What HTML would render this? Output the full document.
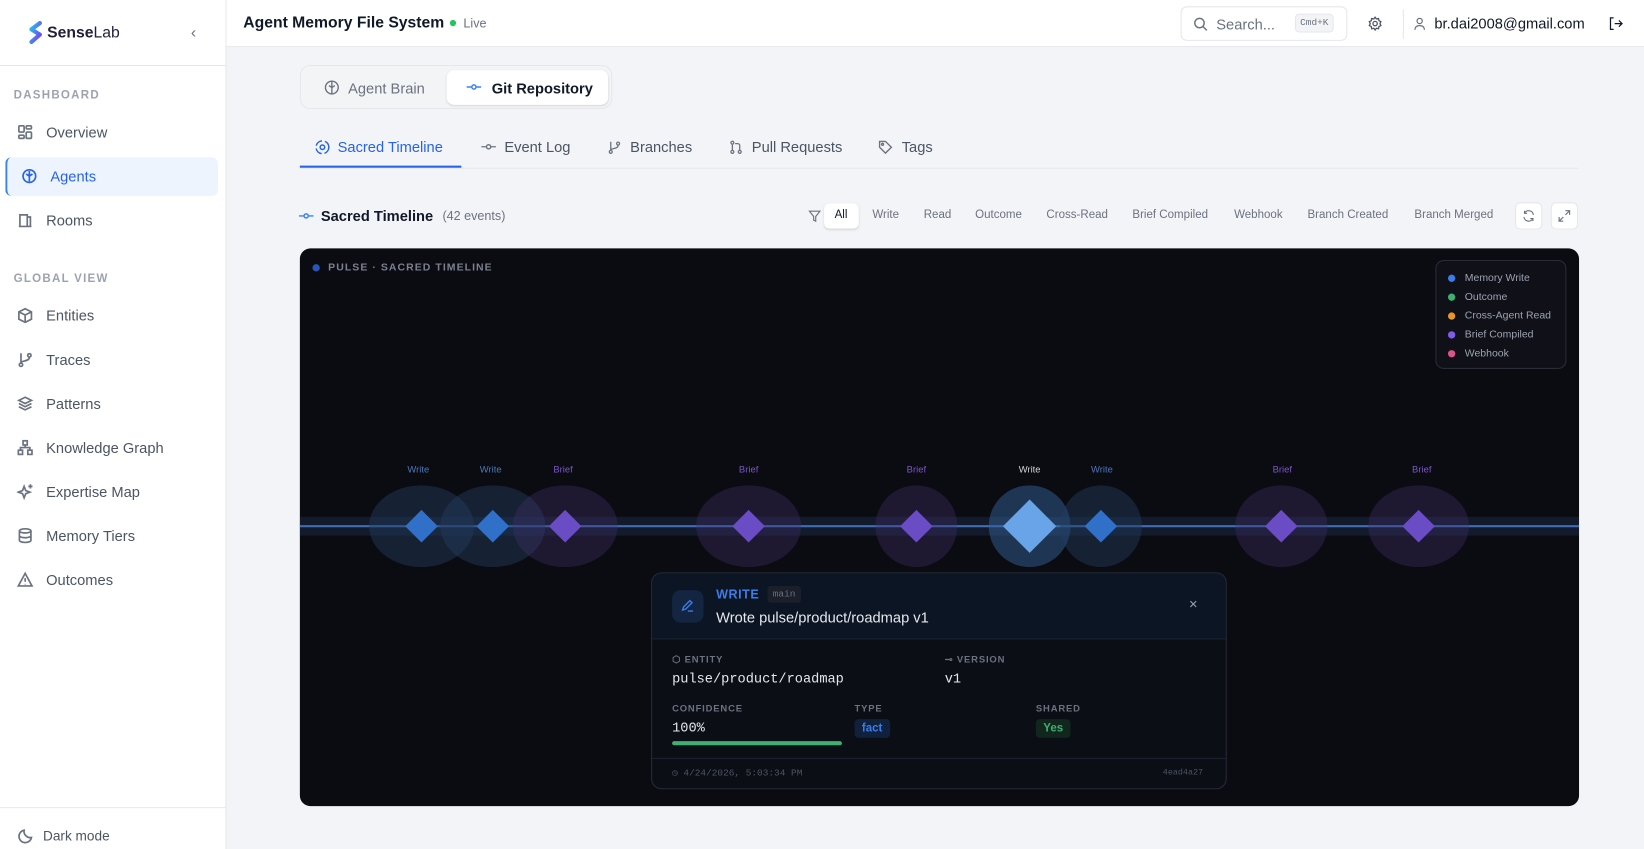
<!DOCTYPE html>
<html><head><meta charset="utf-8"><style>
*{box-sizing:border-box;margin:0;padding:0}
html,body{width:1644px;height:849px;overflow:hidden}
body{font-family:"Liberation Sans",sans-serif;background:#f3f4f7;color:#111827}
#w{position:absolute;left:0;top:0;width:1568px;height:810px;transform:scale(1.0485,1.0482);transform-origin:0 0;background:#f3f4f7}
.abs{position:absolute}
.side{left:0;top:0;width:216px;height:810px;background:#fff;border-right:1px solid #e5e7eb}
.nav{position:absolute;left:16px;display:flex;align-items:center;font-size:14px;color:#4b5563}
.nav svg{width:16px;height:16px;margin-right:12px;stroke:#6b7280;fill:none;stroke-width:1.6}
.sec{position:absolute;left:13px;font-size:11px;letter-spacing:1.2px;color:#9ca3af;font-weight:bold}
.top{left:216px;top:0;width:1352px;height:45px;background:#fff;border-bottom:1px solid #e5e7eb}
.f{position:absolute;top:199px;font-size:11px;color:#6b7280}
.mono{font-family:"Liberation Mono",monospace}
.node{position:absolute;top:463px;width:100px;height:78px;border-radius:50%;margin-left:-50px}
.dia{position:absolute;width:22px;height:22px;transform:rotate(45deg);top:491px;margin-left:-11px}
.lbl{position:absolute;top:443px;font-size:9px;transform:translateX(-50%)}
.lg{display:flex;align-items:center;font-size:10px;color:#9ca3af;height:18px}
.lg i{width:7px;height:7px;border-radius:50%;margin-right:9px;display:inline-block}
.cap{font-size:9px;color:#6b7280;letter-spacing:.8px;font-weight:bold}
</style></head><body><div id="w">
<div class="abs side">
 <div class="abs" style="left:26px;top:20px;display:flex;align-items:center">
  <svg width="16" height="22" viewBox="0 0 16 22"><defs><linearGradient id="g" x1="0" y1="0" x2="1" y2="1"><stop offset="0" stop-color="#22c3ee"/><stop offset="1" stop-color="#7c3aed"/></linearGradient></defs><path d="M12 2 L4 8 L12 13 L4 20" stroke="url(#g)" stroke-width="4" fill="none" stroke-linecap="round" stroke-linejoin="round"/></svg>
  <span style="font-size:15px;font-weight:bold;color:#1f1f3a;margin-left:3px">Sense<span style="font-weight:normal">Lab</span></span>
 </div>
 <div class="abs" style="left:182px;top:23px;color:#6b7280;font-size:15px">‹</div>
 <div class="abs" style="left:0;top:62px;width:216px;border-top:1px solid #e5e7eb"></div>
 <div class="sec" style="top:85px">DASHBOARD</div>
 <div class="nav" style="top:118px"><svg viewBox="0 0 16 16"><rect x="2" y="2" width="5" height="6" rx="1"/><rect x="9" y="2" width="5" height="3" rx="1"/><rect x="9" y="8" width="5" height="6" rx="1"/><rect x="2" y="11" width="5" height="3" rx="1"/></svg>Overview</div>
 <div class="abs" style="left:5px;top:150px;width:203px;height:37px;background:#eef4fe;border-radius:6px;border-left:2px solid #3b82f6"></div>
 <div class="nav" style="top:160px;left:20px;color:#2563eb"><svg viewBox="0 0 16 16" style="stroke:#2563eb"><circle cx="8" cy="8" r="6"/><path d="M8 3v10M5 6l3 2 3-2"/></svg>Agents</div>
 <div class="nav" style="top:202px"><svg viewBox="0 0 16 16"><path d="M3 14V3h7v11M10 5h3v9M2 14h12"/></svg>Rooms</div>
 <div class="sec" style="top:260px">GLOBAL VIEW</div>
 <div class="nav" style="top:293px"><svg viewBox="0 0 16 16"><path d="M8 1.5l6 3v7l-6 3-6-3v-7zM2 4.5l6 3 6-3M8 7.5v7"/></svg>Entities</div>
 <div class="nav" style="top:335px"><svg viewBox="0 0 16 16"><circle cx="4" cy="13" r="1.6"/><circle cx="12" cy="4" r="1.6"/><path d="M4 2v9M12 6c0 4-8 3-8 5"/></svg>Traces</div>
 <div class="nav" style="top:377px"><svg viewBox="0 0 16 16"><path d="M8 2l6 3-6 3-6-3zM2 8l6 3 6-3M2 11l6 3 6-3"/></svg>Patterns</div>
 <div class="nav" style="top:419px"><svg viewBox="0 0 16 16"><rect x="6" y="1.5" width="4" height="4"/><rect x="1.5" y="10.5" width="4" height="4"/><rect x="10.5" y="10.5" width="4" height="4"/><path d="M8 5.5v2.5M3.5 10.5V8h9v2.5"/></svg>Knowledge Graph</div>
 <div class="nav" style="top:461px"><svg viewBox="0 0 16 16"><path d="M7 3l1.5 4 4 1.5-4 1.5L7 14l-1.5-4-4-1.5 4-1.5zM13 1v4M11 3h4"/></svg>Expertise Map</div>
 <div class="nav" style="top:503px"><svg viewBox="0 0 16 16"><ellipse cx="8" cy="3.5" rx="5.5" ry="2"/><path d="M2.5 3.5v9c0 1.1 2.5 2 5.5 2s5.5-.9 5.5-2v-9M2.5 8c0 1.1 2.5 2 5.5 2s5.5-.9 5.5-2"/></svg>Memory Tiers</div>
 <div class="nav" style="top:545px"><svg viewBox="0 0 16 16"><path d="M8 2l6.5 12h-13zM8 6.5v3.5M8 12v.5"/></svg>Outcomes</div>
 <div class="abs" style="left:0;top:770px;width:216px;border-top:1px solid #e5e7eb"></div>
 <div class="nav" style="top:789px;left:17px;font-size:13px"><svg viewBox="0 0 16 16" style="margin-right:8px"><path d="M13 10A6 6 0 0 1 6 3a6 6 0 1 0 7 7z"/></svg>Dark mode</div>
</div>
<div class="abs top">
 <div class="abs" style="left:16px;top:13px;font-size:15px;font-weight:bold">Agent Memory File System</div>
 <div class="abs" style="left:213px;top:19px;width:6px;height:6px;border-radius:50%;background:#22c55e"></div>
 <div class="abs" style="left:226px;top:15px;font-size:12px;color:#6b7280">Live</div>
 <div class="abs" style="left:910px;top:6px;width:159px;height:33px;border:1px solid #e5e7eb;border-radius:6px">
  <svg class="abs" style="left:11px;top:9px" width="14" height="14" viewBox="0 0 14 14" fill="none" stroke="#6b7280" stroke-width="1.4"><circle cx="6" cy="6" r="4.5"/><path d="M9.5 9.5L13 13"/></svg>
  <span class="abs" style="left:33px;top:8px;font-size:14px;color:#6b7280">Search...</span>
  <span class="abs mono" style="left:108px;top:6px;font-size:9px;color:#6b7280;background:#f3f4f6;border:1px solid #e5e7eb;border-radius:4px;padding:3px 4px">Cmd+K</span>
 </div>
 <svg class="abs" style="left:1088px;top:15px" width="15" height="15" viewBox="0 0 16 16" fill="none" stroke="#4b5563" stroke-width="1.3"><circle cx="8" cy="8" r="2.2"/><path d="M8 1.5l1.3 1.8 2.2-.5.4 2.2 2 1-1 2 1 2-2 1-.4 2.2-2.2-.5L8 14.5l-1.3-1.8-2.2.5-.4-2.2-2-1 1-2-1-2 2-1 .4-2.2 2.2.5z"/></svg>
 <div class="abs" style="left:1122px;top:9px;height:28px;border-left:1px solid #e5e7eb"></div>
 <svg class="abs" style="left:1132px;top:16px" width="12" height="13" viewBox="0 0 12 13" fill="none" stroke="#6b7280" stroke-width="1.2"><circle cx="6" cy="4" r="2.5"/><path d="M1.5 12.5c0-3 2-4 4.5-4s4.5 1 4.5 4"/></svg>
 <div class="abs" style="left:1152px;top:14px;font-size:14px;color:#111827">br.dai2008@gmail.com</div>
 <svg class="abs" style="left:1318px;top:16px" width="14" height="13" viewBox="0 0 14 13" fill="none" stroke="#111827" stroke-width="1.2"><path d="M5 1H2v11h3M6 6.5h7M10 3.5l3 3-3 3"/></svg>
</div>
<div class="abs" style="left:286px;top:62px;width:298px;height:42px;background:#f3f4f6;border:1px solid #e5e7eb;border-radius:10px"></div>
<svg class="abs" style="left:309px;top:76px" width="15" height="15" viewBox="0 0 16 16" fill="none" stroke="#6b7280" stroke-width="1.4"><circle cx="8" cy="8" r="6.5"/><path d="M8 2v12M5 6l3 2 3-2"/></svg>
<div class="abs" style="left:332px;top:76px;font-size:14px;color:#6b7280">Agent Brain</div>
<div class="abs" style="left:426px;top:67px;width:154px;height:33px;background:#fff;border-radius:7px;box-shadow:0 1px 2px rgba(0,0,0,.12)"></div>
<svg class="abs" style="left:445px;top:79px" width="14" height="8" viewBox="0 0 14 8" fill="none" stroke="#3b82f6" stroke-width="1.4"><circle cx="7" cy="4" r="2"/><path d="M0 4h5M9 4h5"/></svg>
<div class="abs" style="left:469px;top:76px;font-size:14px;font-weight:bold;color:#111827">Git Repository</div>
<div class="abs" style="left:286px;top:160px;width:1219px;border-top:1px solid #e5e7eb"></div>
<div class="abs" style="left:286px;top:158px;width:154px;height:2px;background:#2563eb"></div>
<svg class="abs" style="left:300px;top:133px" width="15" height="15" viewBox="0 0 16 16" fill="none" stroke="#2563eb" stroke-width="1.5"><circle cx="8" cy="8" r="6.5" stroke-dasharray="8 3"/><circle cx="8" cy="8" r="2.3"/></svg>
<div class="abs" style="left:322px;top:132px;font-size:14px;color:#2563eb">Sacred Timeline</div>
<svg class="abs" style="left:459px;top:136px" width="14" height="8" viewBox="0 0 14 8" fill="none" stroke="#6b7280" stroke-width="1.3"><circle cx="7" cy="4" r="2"/><path d="M0 4h5M9 4h5"/></svg>
<div class="abs" style="left:481px;top:132px;font-size:14px;color:#4b5563">Event Log</div>
<svg class="abs" style="left:579px;top:133px" width="14" height="15" viewBox="0 0 16 16" fill="none" stroke="#6b7280" stroke-width="1.4"><circle cx="4" cy="13" r="1.6"/><circle cx="12" cy="4" r="1.6"/><path d="M4 2v9M12 6c0 4-8 3-8 5"/></svg>
<div class="abs" style="left:601px;top:132px;font-size:14px;color:#4b5563">Branches</div>
<svg class="abs" style="left:695px;top:133px" width="14" height="15" viewBox="0 0 16 16" fill="none" stroke="#6b7280" stroke-width="1.4"><circle cx="4" cy="3" r="1.6"/><circle cx="12" cy="13" r="1.6"/><circle cx="4" cy="13" r="1.6"/><path d="M4 5v6M12 11V6c0-1-1-2-2-2H7"/></svg>
<div class="abs" style="left:717px;top:132px;font-size:14px;color:#4b5563">Pull Requests</div>
<svg class="abs" style="left:837px;top:133px" width="15" height="15" viewBox="0 0 16 16" fill="none" stroke="#6b7280" stroke-width="1.4"><path d="M2 2h6l6 6-6 6-6-6z"/><circle cx="5" cy="5" r="1"/></svg>
<div class="abs" style="left:860px;top:132px;font-size:14px;color:#4b5563">Tags</div>
<svg class="abs" style="left:285px;top:202px" width="14" height="8" viewBox="0 0 14 8" fill="none" stroke="#3b82f6" stroke-width="1.4"><circle cx="7" cy="4" r="2"/><path d="M0 4h5M9 4h5"/></svg>
<div class="abs" style="left:306px;top:198px;font-size:14px;font-weight:bold">Sacred Timeline</div>
<div class="abs" style="left:422px;top:199px;font-size:12px;color:#6b7280">(42 events)</div>
<svg class="abs" style="left:771px;top:200px" width="12" height="12" viewBox="0 0 12 12" fill="none" stroke="#6b7280" stroke-width="1.1"><path d="M1 1.5h10L7 6.5V11L5 10V6.5z"/></svg>
<div class="abs" style="left:786px;top:194px;width:33px;height:24px;background:#fff;border-radius:5px;box-shadow:0 1px 2px rgba(0,0,0,.12)"></div>
<div class="f" style="left:796px;color:#111827">All</div>
<div class="f" style="left:832px">Write</div>
<div class="f" style="left:881px">Read</div>
<div class="f" style="left:930px">Outcome</div>
<div class="f" style="left:998px">Cross-Read</div>
<div class="f" style="left:1080px">Brief Compiled</div>
<div class="f" style="left:1177px">Webhook</div>
<div class="f" style="left:1247px">Branch Created</div>
<div class="f" style="left:1349px">Branch Merged</div>
<div class="abs" style="left:1445px;top:193px;width:26px;height:26px;border:1px solid #e5e7eb;border-radius:5px;background:#fff"></div>
<svg class="abs" style="left:1452px;top:200px" width="12" height="12" viewBox="0 0 12 12" fill="none" stroke="#6b7280" stroke-width="1.1"><path d="M10.5 5A4.5 4.5 0 0 0 2 3.5M1.5 7a4.5 4.5 0 0 0 8.5 1.5M2 1v2.5h2.5M10 11V8.5H7.5"/></svg>
<div class="abs" style="left:1479px;top:193px;width:26px;height:26px;border:1px solid #e5e7eb;border-radius:5px;background:#fff"></div>
<svg class="abs" style="left:1486px;top:200px" width="12" height="12" viewBox="0 0 12 12" fill="none" stroke="#6b7280" stroke-width="1.1"><path d="M7 1h4v4M11 1L7 5M5 11H1V7M1 11l4-4"/></svg>
<div class="abs" style="left:286px;top:237px;width:1220px;height:532px;background:#0b0b12;border-radius:10px;overflow:hidden">
 <div class="abs" style="left:12px;top:15px;width:7px;height:7px;border-radius:50%;background:#2956b6"></div>
 <div class="abs" style="left:27px;top:13px;font-size:10px;letter-spacing:1px;color:#7b8190;font-weight:bold">PULSE · SACRED TIMELINE</div>
 <div class="abs" style="left:1083px;top:11px;width:125px;height:104px;border:1px solid #2a2d38;border-radius:8px;background:#0f1018;padding:7px 0 0 11px">
  <div class="lg"><i style="background:#3b7de8"></i>Memory Write</div>
  <div class="lg"><i style="background:#3fae72"></i>Outcome</div>
  <div class="lg"><i style="background:#e8962c"></i>Cross-Agent Read</div>
  <div class="lg"><i style="background:#7c5ce8"></i>Brief Compiled</div>
  <div class="lg"><i style="background:#d9548b"></i>Webhook</div>
 </div>
</div>
<div class="abs" style="left:286px;top:493px;width:1220px;height:18px;background:rgba(40,70,120,.25)"></div>
<div class="abs" style="left:286px;top:501px;width:1220px;height:2px;background:#3f6db8"></div>
<div class="node" style="left:402px;background:rgba(35,60,95,.45)"></div>
<div class="node" style="left:470px;background:rgba(35,60,95,.45)"></div>
<div class="node" style="left:539px;background:rgba(70,50,110,.35)"></div>
<div class="node" style="left:714px;background:rgba(70,50,110,.35)"></div>
<div class="node" style="left:874px;width:78px;margin-left:-39px;background:rgba(70,50,110,.35)"></div>
<div class="node" style="left:982px;width:78px;margin-left:-39px;background:rgba(50,95,150,.5)"></div>
<div class="node" style="left:1050px;width:78px;margin-left:-39px;background:rgba(35,60,95,.45)"></div>
<div class="node" style="left:1222px;width:88px;margin-left:-44px;background:rgba(70,50,110,.35)"></div>
<div class="node" style="left:1353px;width:96px;margin-left:-48px;background:rgba(70,50,110,.35)"></div>
<div class="dia" style="left:402px;background:#3070c8"></div>
<div class="dia" style="left:470px;background:#3070c8"></div>
<div class="dia" style="left:539px;background:#6a4cc4"></div>
<div class="dia" style="left:714px;background:#6a4cc4"></div>
<div class="dia" style="left:874px;background:#6a4cc4"></div>
<div class="dia" style="left:982px;width:36px;height:36px;top:484px;margin-left:-18px;background:#6aa4e8"></div>
<div class="dia" style="left:1050px;background:#3070c8"></div>
<div class="dia" style="left:1222px;background:#6a4cc4"></div>
<div class="dia" style="left:1353px;background:#6a4cc4"></div>
<div class="lbl" style="left:399px;color:#4a78b8">Write</div>
<div class="lbl" style="left:468px;color:#4a78b8">Write</div>
<div class="lbl" style="left:537px;color:#7a55c8">Brief</div>
<div class="lbl" style="left:714px;color:#7a55c8">Brief</div>
<div class="lbl" style="left:874px;color:#7a55c8">Brief</div>
<div class="lbl" style="left:982px;color:#cfd3dc">Write</div>
<div class="lbl" style="left:1051px;color:#4a78b8">Write</div>
<div class="lbl" style="left:1223px;color:#7a55c8">Brief</div>
<div class="lbl" style="left:1356px;color:#7a55c8">Brief</div>
<div class="abs" style="left:621px;top:546px;width:549px;height:207px;background:#0b0e15;border:1px solid #272c38;border-radius:10px;overflow:hidden">
 <div class="abs" style="left:0;top:0;width:549px;height:63px;background:#0c1524;border-bottom:1px solid #1d2330"></div>
 <div class="abs" style="left:19px;top:16px;width:30px;height:31px;border-radius:8px;background:#132541"></div>
 <svg class="abs" style="left:27px;top:24px" width="14" height="14" viewBox="0 0 14 14" fill="none" stroke="#3b7de8" stroke-width="1.3"><path d="M2 11l1-3 6-6 2 2-6 6zM7 12h5"/></svg>
 <div class="abs" style="left:61px;top:13px;font-size:12px;font-weight:bold;color:#3b7de8;letter-spacing:.5px">WRITE</div>
 <div class="abs mono" style="left:110px;top:12px;font-size:9px;color:#6b7280;background:#1a1f2a;border-radius:3px;padding:3px 5px">main</div>
 <div class="abs" style="left:61px;top:34px;font-size:14px;color:#e5e7eb">Wrote pulse/product/roadmap v1</div>
 <div class="abs" style="left:512px;top:21px;font-size:14px;color:#9ca3af">×</div>
 <div class="abs cap" style="left:19px;top:77px">⬡ ENTITY</div>
 <div class="abs mono" style="left:19px;top:93px;font-size:13px;color:#e5e7eb">pulse/product/roadmap</div>
 <div class="abs cap" style="left:279px;top:77px">⊸ VERSION</div>
 <div class="abs mono" style="left:279px;top:93px;font-size:13px;color:#e5e7eb">v1</div>
 <div class="abs cap" style="left:19px;top:124px">CONFIDENCE</div>
 <div class="abs mono" style="left:19px;top:140px;font-size:13px;color:#e5e7eb">100%</div>
 <div class="abs" style="left:19px;top:160px;width:162px;height:4px;border-radius:2px;background:#3fae72"></div>
 <div class="abs cap" style="left:193px;top:124px">TYPE</div>
 <div class="abs" style="left:193px;top:139px;font-size:11px;font-weight:bold;color:#3b7de8;background:#10213d;border-radius:4px;padding:3px 7px">fact</div>
 <div class="abs cap" style="left:366px;top:124px">SHARED</div>
 <div class="abs" style="left:366px;top:139px;font-size:11px;font-weight:bold;color:#3fae72;background:#11261d;border-radius:4px;padding:3px 7px">Yes</div>
 <div class="abs" style="left:0;top:176px;width:549px;border-top:1px solid #1d2330"></div>
 <div class="abs mono" style="left:19px;top:186px;font-size:9px;color:#4b5563">◷ 4/24/2026, 5:03:34 PM</div>
 <div class="abs mono" style="left:487px;top:186px;font-size:8px;color:#4b5563">4ead4a27</div>
</div>
</div></body></html>
